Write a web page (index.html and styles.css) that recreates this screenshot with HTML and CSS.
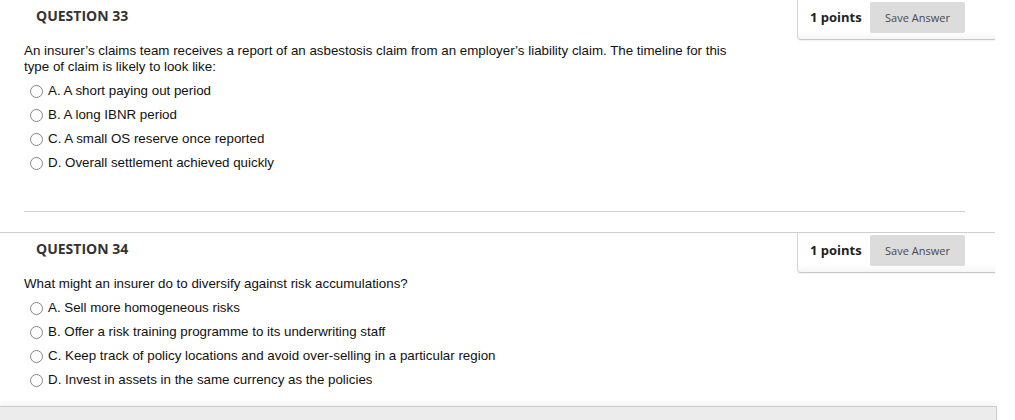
FILE: index.html
```html
<!DOCTYPE html>
<html lang="en">
<head>
<meta charset="utf-8">
<title>Questions</title>
<link rel="stylesheet" href="styles.css">
</head>
<body>
<div class="page">
  <section class="question first">
    <div class="q-header">
      <h3 class="q-title">QUESTION 33</h3>
      <div class="points-box">
        <span class="points">1 points</span>
        <button class="save-btn" type="button">Save Answer</button>
      </div>
    </div>
    <p class="q-text">An insurer’s claims team receives a report of an asbestosis claim from an employer’s liability claim. The timeline for this type of claim is likely to look like:</p>
    <ul class="options">
      <li class="option"><span class="radio"></span><span class="label">A. A short paying out period</span></li>
      <li class="option"><span class="radio"></span><span class="label">B. A long IBNR period</span></li>
      <li class="option"><span class="radio"></span><span class="label">C. A small OS reserve once reported</span></li>
      <li class="option"><span class="radio"></span><span class="label">D. Overall settlement achieved quickly</span></li>
    </ul>
    <hr class="separator">
  </section>

  <section class="question second">
    <div class="q-header">
      <h3 class="q-title">QUESTION 34</h3>
      <div class="points-box">
        <span class="points">1 points</span>
        <button class="save-btn" type="button">Save Answer</button>
      </div>
    </div>
    <p class="q-text">What might an insurer do to diversify against risk accumulations?</p>
    <ul class="options">
      <li class="option"><span class="radio"></span><span class="label">A. Sell more homogeneous risks</span></li>
      <li class="option"><span class="radio"></span><span class="label">B. Offer a risk training programme to its underwriting staff</span></li>
      <li class="option"><span class="radio"></span><span class="label">C. Keep track of policy locations and avoid over-selling in a particular region</span></li>
      <li class="option"><span class="radio"></span><span class="label">D. Invest in assets in the same currency as the policies</span></li>
    </ul>
  </section>

  <div class="footer-bar"></div>
</div>
</body>
</html>
```

FILE: styles.css
```css
html, body {
  margin: 0;
  padding: 0;
  background: #ffffff;
}

body {
  font-family: "Liberation Sans", Arial, sans-serif;
  color: #111111;
  overflow: hidden;
}

.page {
  width: 995px;
}

.question.second {
  border-top: 1px solid #cfcfcf;
  margin-top: 20px;
}

.q-header {
  display: flex;
  justify-content: space-between;
  align-items: flex-start;
  height: 40px;
}

.q-title {
  margin: 0;
  padding: 6px 0 0 36px;
  font-family: "Open Sans", sans-serif;
  font-weight: 700;
  font-size: 14px;
  line-height: 19px;
  color: #333333;
}

.points-box {
  box-sizing: border-box;
  width: 198px;
  height: 40px;
  display: flex;
  align-items: flex-start;
  padding: 2px 30px 0 12px;
  border-left: 1px solid #d4d4d4;
  border-bottom: 1px solid #c8c8c8;
  border-bottom-left-radius: 4px;
  background: linear-gradient(to bottom, #ffffff 0%, #ffffff 80%, #f6f6f6 100%);
  box-shadow: 0 1px 1px rgba(0, 0, 0, 0.06);
}

.points {
  font-family: "Open Sans", sans-serif;
  font-weight: 700;
  font-size: 13px;
  line-height: 18px;
  color: #222222;
  padding-top: 6px;
  width: 60px;
  flex: none;
}

.save-btn {
  flex: none;
  width: 95px;
  height: 31px;
  margin: 0;
  padding: 0;
  border: none;
  border-radius: 2px;
  background: #dcdcdc;
  font-family: "Open Sans", sans-serif;
  font-size: 11px;
  color: #4a4a4a;
  cursor: pointer;
}

.q-text {
  margin: 3px 0 0 24px;
  width: 720px;
  font-size: 13.33px;
  line-height: 16px;
  color: #111111;
}

.options {
  list-style: none;
  margin: 4px 0 0 0;
  padding: 0 0 0 30px;
}

.option {
  display: flex;
  align-items: center;
  height: 24px;
  font-size: 13.33px;
  color: #111111;
}

.radio {
  box-sizing: border-box;
  flex: none;
  width: 13px;
  height: 13px;
  border: 1px solid #858585;
  border-radius: 50%;
  background: #ffffff;
  margin-right: 5px;
}

.label {
  line-height: 16px;
}

.separator {
  margin: 36px 30px 0 24px;
  border: none;
  border-top: 1px solid #d0d0d0;
  height: 0;
}

.footer-bar {
  margin-top: 14px;
  width: 996px;
  height: 30px;
  background: #ececec;
  border-top: 1px solid #cccccc;
  border-right: 1px solid #cccccc;
  box-shadow: 0 -3px 6px rgba(0, 0, 0, 0.05);
}
```
